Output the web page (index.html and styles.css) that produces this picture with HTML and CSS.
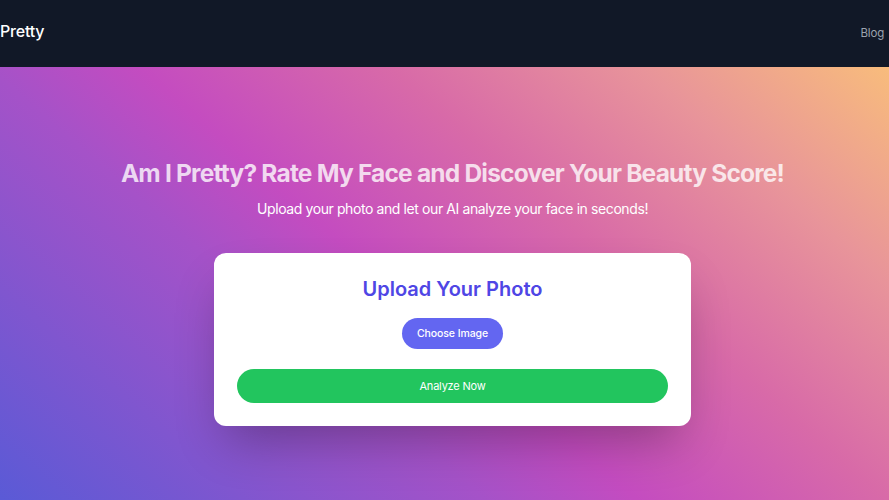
FILE: index.html
```html
<!DOCTYPE html>
<html lang="en">
<head>
<meta charset="utf-8">
<title>Am I Pretty?</title>
<link rel="stylesheet" href="styles.css">
</head>
<body>
<header class="site-header">
  <a class="logo" href="#">Pretty</a>
  <nav class="nav"><a href="#">Blog</a></nav>
</header>
<main class="hero">
  <h1 class="hero-title">Am I Pretty? Rate My Face and Discover Your Beauty Score!</h1>
  <p class="hero-sub">Upload your photo and let our AI analyze your face in seconds!</p>
  <section class="card">
    <h2 class="card-title">Upload Your Photo</h2>
    <button class="btn btn-choose">Choose Image</button>
    <button class="btn btn-analyze">Analyze Now</button>
  </section>
</main>
</body>
</html>
```
FILE: styles.css
```css
* { box-sizing: border-box; }
html, body { margin: 0; padding: 0; height: 100%; overflow: hidden; }
body { font-family: Inter, "Noto Sans", sans-serif; }

.site-header {
  height: 67px;
  background: #111827;
  display: flex;
  align-items: center;
  justify-content: space-between;
  padding: 0 5px 6px 0;
}
.logo { color: #fff; text-decoration: none; font-size: 16px; font-weight: 500; letter-spacing: -0.2px; }
.nav a { color: #9ca3af; text-decoration: none; font-size: 11.5px; letter-spacing: -0.2px; }

.hero {
  height: calc(100% - 67px);
  background: linear-gradient(41deg, #5a5ad6 0%, #a552c8 35%, #c44cc0 46%, #d86aa8 64%, #e8949a 82%, #f8bc7c 100%);
  display: flex;
  flex-direction: column;
  align-items: center;
  padding: 90px 0 0 16px;
}
.hero-title {
  margin: 0;
  font-size: 24.5px;
  line-height: 32px;
  font-weight: 700;
  color: rgba(255,255,255,0.78);
  letter-spacing: -0.8px;
}
.hero-sub { margin: 10px 0 0; font-size: 14px; line-height: 20px; color: #fff; letter-spacing: -0.4px; }

.card {
  margin-top: 34px;
  width: 477px;
  background: #fff;
  border-radius: 12px;
  box-shadow: 0 25px 50px -12px rgba(0,0,0,0.3);
  padding: 22px 23px 23px;
  display: flex;
  flex-direction: column;
  align-items: center;
}
.card-title { margin: 0; font-size: 20px; line-height: 28px; font-weight: 600; color: #4f46e5; }
.btn { border: 0; border-radius: 999px; color: #fff; font-family: inherit; cursor: pointer; padding: 0; }
.btn-choose { margin-top: 15px; width: 101px; height: 31px; background: #6366f1; font-size: 10.5px; font-weight: 500; letter-spacing: -0.1px; }
.btn-analyze { margin-top: 20px; width: 100%; height: 34px; background: #22c55e; font-size: 11px; letter-spacing: -0.2px; }
```
